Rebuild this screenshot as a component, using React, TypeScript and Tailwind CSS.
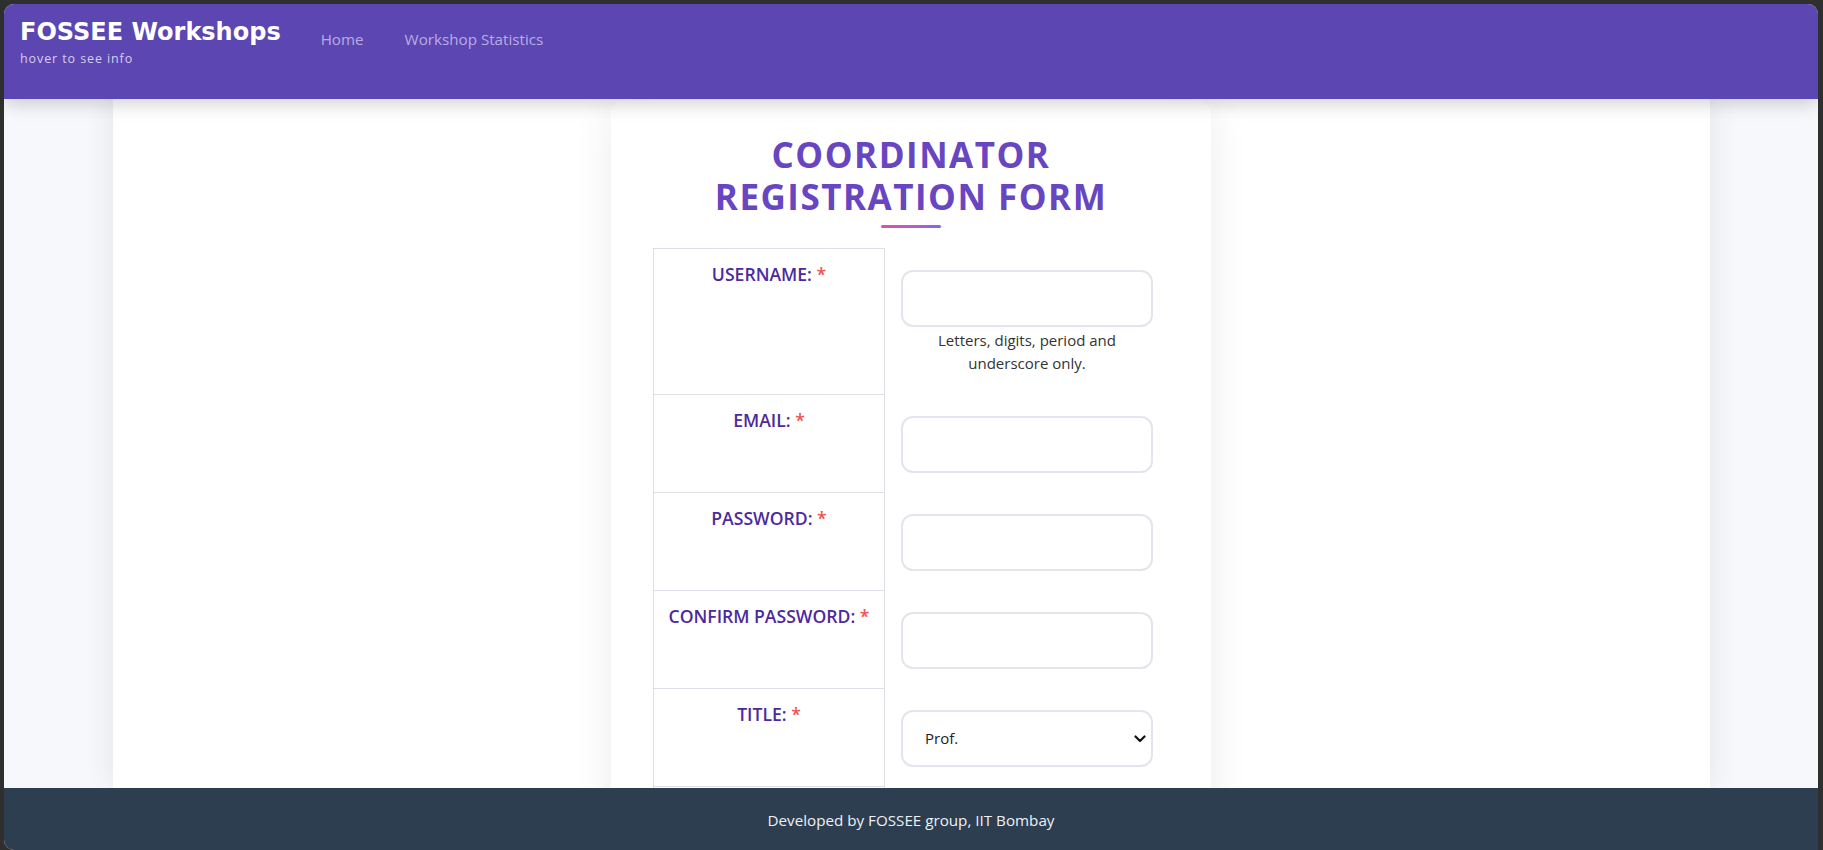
import React from "react";

const labelCls =
  "w-[232px] shrink-0 border-x border-b border-[#dedee6] pt-[12px] text-center text-[17.6px] leading-[26px] font-semibold text-[#4c2a9c] uppercase";

function Row({
  label,
  first,
  children,
}: {
  label: string;
  first?: boolean;
  children: React.ReactNode;
}) {
  return (
    <div className="flex">
      <div className={labelCls + (first ? " border-t" : "")}>
        {label} <span className="text-[#f05252]">*</span>
      </div>
      <div className={"flex-1 px-[16px] pb-[20px] " + (first ? "pt-[22px]" : "pt-[21px]")}>
        {children}
      </div>
    </div>
  );
}

function Input({ type = "text" }: { type?: string }) {
  return (
    <input
      type={type}
      className="block h-[57px] w-full rounded-[12px] border-2 border-[#e4e4ec] bg-white px-[16px] text-[15px] outline-none"
    />
  );
}

export default function App() {
  return (
    <div
      className="h-[850px] w-[1823px] overflow-hidden bg-[#2f2f2f] pl-[4px] pr-[5px] pt-[4px]"
      style={{ fontFamily: '"Open Sans", "Noto Sans", sans-serif' }}
    >
      <div className="flex h-[846px] flex-col overflow-hidden rounded-t-[10px] rounded-bl-[10px] bg-[#f7f8fc]">
        <nav className="relative z-10 flex h-[95px] shrink-0 items-start bg-[#5b46b2] pl-[16px] shadow-[0_4px_18px_rgba(0,0,0,0.2)]">
          <div className="pt-[16px]">
            <div
              className="text-[24px] font-bold leading-[24px] text-white"
              style={{ fontFamily: '"DejaVu Sans", sans-serif' }}
            >
              FOSSEE Workshops
            </div>
            <div className="mt-[7px] text-[12.5px] leading-[16px] tracking-[0.9px] text-[#d6cff0]">
              hover to see info
            </div>
          </div>
          <div className="ml-[40px] flex gap-[41px] pt-[25px] text-[15.2px] leading-[20px] text-[#b8ade3]">
            <span>Home</span>
            <span>Workshop Statistics</span>
          </div>
        </nav>

        <main className="flex flex-1 justify-center overflow-hidden">
          <div className="flex w-[1597px] justify-center bg-white shadow-[0_0_30px_rgba(0,0,0,0.09)]">
            <div className="mt-[1px] h-[900px] w-[600px] rounded-[14px] bg-white px-[42px] pt-[34px] shadow-[0_10px_40px_rgba(0,0,0,0.08)]">
              <h1 className="text-center text-[35px] font-bold uppercase leading-[42px] tracking-[1.5px] text-[#6846c1]">
                Coordinator
                <br />
                Registration Form
              </h1>
              <div className="mx-auto mt-[7px] h-[3px] w-[60px] rounded-full bg-linear-to-r from-[#ec4899] to-[#8b5cf6]" />

              <div className="mt-[20px]">
                <Row label="Username:" first>
                  <Input />
                  <p className="mt-[2px] text-center text-[15px] leading-[23px] text-[#333]">
                    Letters, digits, period and
                    <br />
                    underscore only.
                  </p>
                </Row>
                <Row label="Email:">
                  <Input type="email" />
                </Row>
                <Row label="Password:">
                  <Input type="password" />
                </Row>
                <Row label="Confirm Password:">
                  <Input type="password" />
                </Row>
                <Row label="Title:">
                  <div className="relative">
                    <select
                      defaultValue="Prof."
                      className="block h-[57px] w-full appearance-none rounded-[12px] border-2 border-[#e4e4ec] bg-white pl-[22px] text-[15px] text-[#222] outline-none"
                    >
                      <option>Prof.</option>
                      <option>Dr.</option>
                      <option>Mr.</option>
                      <option>Ms.</option>
                    </select>
                    <svg
                      className="pointer-events-none absolute right-[7px] top-1/2 -translate-y-1/2"
                      width="12"
                      height="8"
                      viewBox="0 0 12 8"
                      fill="none"
                    >
                      <path d="M1.5 1.5 L6 6 L10.5 1.5" stroke="#111" strokeWidth="2.2" strokeLinecap="round" strokeLinejoin="round" />
                    </svg>
                  </div>
                </Row>
                <Row label="First Name:">
                  <Input />
                </Row>
              </div>
            </div>
          </div>
        </main>

        <footer className="flex h-[62px] shrink-0 items-center justify-center bg-[#2c3e50] pt-[3px] text-[15.2px] text-[#eef0f4]">
          Developed by FOSSEE group, IIT Bombay
        </footer>
      </div>
    </div>
  );
}
